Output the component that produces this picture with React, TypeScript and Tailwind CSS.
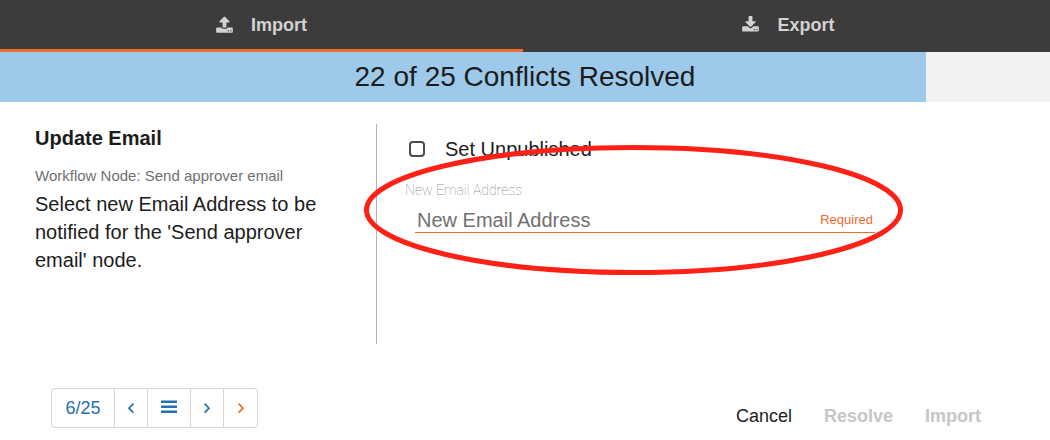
import React, { useState } from 'react';

interface TabProps {
  label: string;
  icon: React.ReactNode;
  active: boolean;
  onSelect: () => void;
}

const UploadIcon: React.FC = () => (
  <svg viewBox="0 0 1664 1792" className="h-[18px] w-[17px]" fill="currentColor" aria-hidden="true">
    <path d="M1280 1472q0-26-19-45t-45-19-45 19-19 45 19 45 45 19 45-19 19-45zm256 0q0-26-19-45t-45-19-45 19-19 45 19 45 45 19 45-19 19-45zm128-224v320q0 40-28 68t-68 28h-1472q-40 0-68-28t-28-68v-320q0-40 28-68t68-28h427q21 56 70.5 92t110.5 36h256q61 0 110.5-36t70.5-92h427q40 0 68 28t28 68zm-325-648q-17 40-59 40h-256v448q0 26-19 45t-45 19h-256q-26 0-45-19t-19-45v-448h-256q-42 0-59-40-17-39 14-69l448-448q18-19 45-19t45 19l448 448q31 30 14 69z" />
  </svg>
);

const DownloadIcon: React.FC = () => (
  <svg viewBox="0 0 1664 1792" className="h-[18px] w-[17px]" fill="currentColor" aria-hidden="true">
    <path d="M1280 1344q0-26-19-45t-45-19-45 19-19 45 19 45 45 19 45-19 19-45zm256 0q0-26-19-45t-45-19-45 19-19 45 19 45 45 19 45-19 19-45zm128-224v320q0 40-28 68t-68 28h-1472q-40 0-68-28t-28-68v-320q0-40 28-68t68-28h465l135 136q58 56 136 56t136-56l136-136h464q40 0 68 28t28 68zm-325-569q17 41-14 70l-448 448q-18 19-45 19t-45-19l-448-448q-31-29-14-70 17-39 59-39h256v-448q0-26 19-45t45-19h256q26 0 45 19t19 45v448h256q42 0 59 39z" />
  </svg>
);

const BarsIcon: React.FC = () => (
  <svg viewBox="0 0 16 16" className="size-4" fill="currentColor" aria-hidden="true">
    <path d="M0 .5h16V3H0zM0 5.5h16V8H0zM0 10.5h16V13H0z" />
  </svg>
);

const ChevronIcon: React.FC<{ direction: 'left' | 'right' }> = ({ direction }) => (
  <svg viewBox="0 0 8 12" className="h-3 w-2" fill="none" stroke="currentColor" strokeWidth="1.7" aria-hidden="true">
    <path d={direction === 'left' ? 'M6.4 1.7 2 6.2l4.4 4.5' : 'M1.6 1.7 6 6.2l-4.4 4.5'} />
  </svg>
);

const Tab: React.FC<TabProps> = ({ label, icon, active, onSelect }) => (
  <button
    role="tab"
    aria-selected={active}
    onClick={onSelect}
    className={`flex h-[52px] flex-1 items-center justify-center gap-[18px] border-b-[3px] text-lg font-bold text-[#d2d2d2] ${active ? 'border-[#ee6c30]' : 'border-transparent'}`}
  >
    {icon}
    <span>{label}</span>
  </button>
);

const App: React.FC = () => {
  const [tab, setTab] = useState('import');
  const [unpublished, setUnpublished] = useState(false);
  const [email, setEmail] = useState('');
  const resolved = 22;
  const total = 25;

  return (
    <div className="min-h-screen bg-white font-['Liberation_Sans',Arial,sans-serif] text-[#1c1c1c]">
      <div role="tablist" className="flex gap-1 bg-[#3c3c3c]">
        <Tab label="Import" icon={<UploadIcon />} active={tab === 'import'} onSelect={() => setTab('import')} />
        <Tab label="Export" icon={<DownloadIcon />} active={tab === 'export'} onSelect={() => setTab('export')} />
      </div>

      <div className="grid h-[50px] items-center bg-[#f2f2f2]">
        <div
          className="col-start-1 row-start-1 box-content h-full bg-[#9dc9ea] pr-0.5"
          style={{ width: `${(resolved / total) * 100}%` }}
        />
        <p className="col-start-1 row-start-1 text-center text-[28px]">
          {resolved} of {total} Conflicts Resolved
        </p>
      </div>

      <main className="mt-[22px] flex">
        <section className="w-[376px] shrink-0 pr-12 pl-[35px]">
          <h1 className="text-xl leading-7 font-bold">Update Email</h1>
          <p className="mt-3 text-[15px] leading-6 text-[#707070]">Workflow Node: Send approver email</p>
          <p className="mt-0.5 text-xl leading-7">Select new Email Address to be notified for the 'Send approver email' node.</p>
        </section>

        <section className="relative h-[220px] flex-1 border-l border-[#b3b3b3] pt-3 pl-7">
          <label className="ml-1 flex items-center gap-5 text-xl leading-[26px]">
            <input
              type="checkbox"
              checked={unpublished}
              onChange={(e) => setUnpublished(e.target.checked)}
              className="size-4 appearance-none rounded border-2 border-[#4a4a4a] bg-white checked:bg-[#2470b0]"
            />
            Set Unpublished
          </label>
          <label htmlFor="email" className="mt-[18px] block font-[Roboto,sans-serif] text-sm leading-5 font-thin text-[#8a8a8a]">
            New Email Address
          </label>
          <div className="mt-2 mr-[175px] ml-[10px] flex items-end border-b border-[#ee6c30] px-[2px]">
            <input
              id="email"
              type="email"
              required
              value={email}
              onChange={(e) => setEmail(e.target.value)}
              placeholder="New Email Address"
              className="min-w-0 flex-1 text-xl leading-6 outline-none placeholder:text-[#707070]"
            />
            <span className="text-[13px] leading-6 text-[#ee6c30]">Required</span>
          </div>
          <svg
            viewBox="0 0 540 130"
            className="pointer-events-none absolute top-[21px] -left-[13px] h-[130px] w-[540px]"
            fill="none"
            stroke="#ff2116"
            strokeWidth="5"
            aria-hidden="true"
          >
            <ellipse cx="269.5" cy="65" rx="267" ry="62.5" />
          </svg>
        </section>
      </main>

      <footer className="mt-11 flex items-start justify-between pr-[69px] pl-[51px]">
        <nav
          aria-label="Conflicts"
          className="flex h-10 divide-x divide-[#d5d5d5] rounded border border-[#d5d5d5] text-lg text-[#2470b0]"
        >
          <span className="flex w-[63px] items-center justify-center">6/25</span>
          <button aria-label="Previous" className="flex w-[33px] items-center justify-center">
            <ChevronIcon direction="left" />
          </button>
          <button aria-label="List" className="flex w-[43px] items-center justify-center">
            <BarsIcon />
          </button>
          <button aria-label="Next" className="flex w-[33px] items-center justify-center">
            <ChevronIcon direction="right" />
          </button>
          <button aria-label="Next unresolved" className="flex w-[33px] items-center justify-center text-[#ee6c30]">
            <ChevronIcon direction="right" />
          </button>
        </nav>
        <div className="mt-[14px] flex gap-8 text-lg">
          <button>Cancel</button>
          <button disabled className="font-bold text-[#c6c6c6]">Resolve</button>
          <button disabled className="font-bold text-[#c6c6c6]">Import</button>
        </div>
      </footer>
    </div>
  );
};

export default App;
